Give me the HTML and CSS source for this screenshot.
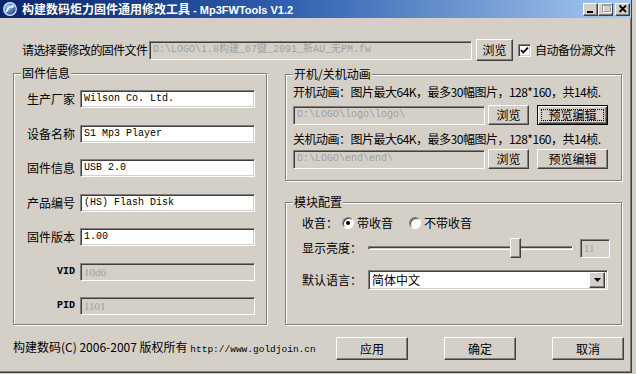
FILE: index.html
```html
<!DOCTYPE html>
<html lang="zh-CN">
<head>
<meta charset="utf-8">
<title>Mp3FWTools V1.2</title>
<link rel="stylesheet" href="styles.css">
</head>
<body>
<div class="window">
  <div class="titlebar">
    <svg class="app-icon" viewBox="0 0 14 14">
      <defs>
        <radialGradient id="ig" cx="35%" cy="35%" r="75%">
          <stop offset="0" stop-color="#9cc8ff"/>
          <stop offset="1" stop-color="#0b3b8c"/>
        </radialGradient>
      </defs>
      <circle cx="7" cy="7" r="6.3" fill="url(#ig)" stroke="#e8eef8" stroke-width="1.2"/>
      <path d="M3.2 10.2 C4.6 6.2 7.4 4.2 10.2 4.4" stroke="#fff" stroke-width="1.7" fill="none"/>
      <path d="M8.6 2.6 L11.6 4.3 L9.2 6.6 Z" fill="#fff"/>
    </svg>
    <span class="title">构建数码炬力固件通用修改工具<span class="title-en"> - Mp3FWTools V1.2</span></span>
    <div class="caption-btns">
      <span class="cbtn"><svg viewBox="0 0 12 10" class="cglyph"><rect x="2" y="7" width="6" height="2" fill="#000"/></svg></span>
      <span class="cbtn"><svg viewBox="0 0 12 10" class="cglyph"><rect x="3.5" y="1.5" width="8" height="7" fill="none" stroke="#fff"/><rect x="2.5" y="0.5" width="8" height="7" fill="none" stroke="#a0a0a0"/><rect x="2" y="0" width="9" height="2" fill="#a0a0a0"/></svg></span>
      <span class="cbtn close"><svg viewBox="0 0 12 10" class="cglyph"><path d="M2.5 1.5 L9 8 M9 1.5 L2.5 8" stroke="#000" stroke-width="1.8"/></svg></span>
    </div>
  </div>

  <div class="client">
    <div class="file-row">
      <span class="file-label">请选择要修改的固件文件</span>
      <div class="edit disabled path">D:\LOGO\1.8构建_67键_2091_新AU_无PM.fw</div>
      <span class="btn browse-top">浏览</span>
      <span class="check"><svg viewBox="0 0 9 9" width="9" height="9"><path d="M1 4 L3.3 6.4 L8 1.6" stroke="#000" stroke-width="1.8" fill="none"/></svg></span>
      <span class="check-label">自动备份源文件</span>
    </div>

    <div class="groups">
      <div class="group info">
        <span class="group-title">固件信息</span>
        <div class="info-grid">
          <span class="lbl">生产厂家</span><div class="edit">Wilson Co. Ltd.</div>
          <span class="lbl">设备名称</span><div class="edit">S1 Mp3 Player</div>
          <span class="lbl">固件信息</span><div class="edit">USB 2.0</div>
          <span class="lbl">产品编号</span><div class="edit">(HS) Flash Disk</div>
          <span class="lbl">固件版本</span><div class="edit">1.00</div>
          <span class="lbl latin">VID</span><div class="edit disabled num">10d6</div>
          <span class="lbl latin">PID</span><div class="edit disabled num">1101</div>
        </div>
      </div>

      <div class="right-col">
        <div class="group anim">
          <span class="group-title">开机/关机动画</span>
          <div class="anim-text">开机动画：图片最大64K，最多30幅图片，128*160，共14桢.</div>
          <div class="anim-row">
            <div class="edit disabled path-s">D:\LOGO\logo\logo\</div>
            <span class="btn browse">浏览</span>
            <span class="btn preview focus"><span class="focus-rect">预览编辑</span></span>
          </div>
          <div class="anim-text second">关机动画：图片最大64K，最多30幅图片，128*160，共14桢.</div>
          <div class="anim-row second">
            <div class="edit disabled path-s">D:\LOGO\end\end\</div>
            <span class="btn browse">浏览</span>
            <span class="btn preview">预览编辑</span>
          </div>
        </div>

        <div class="group module">
          <span class="group-title">模块配置</span>
          <div class="mod-row radio-row">
            <span>收音：</span>
            <span class="radio"><span class="dot"></span></span>
            <span class="radio-label">带收音</span>
            <span class="radio second"></span>
            <span class="radio-label">不带收音</span>
          </div>
          <div class="mod-row bright-row">
            <span class="mod-label">显示亮度：</span>
            <div class="slider">
              <div class="track"></div>
              <span class="thumb"></span>
            </div>
            <div class="edit disabled num value">11</div>
          </div>
          <div class="mod-row lang-row">
            <span class="mod-label">默认语言：</span>
            <div class="combo">
              <span class="combo-text">简体中文</span>
              <span class="combo-btn"><svg viewBox="0 0 7 4" width="7" height="4"><path d="M0 0 H7 L3.5 4 Z" fill="#000"/></svg></span>
            </div>
          </div>
        </div>
      </div>
    </div>

    <div class="footer">
      <span class="copyright">构建数码(C) 2006-2007 版权所有 <span class="url">http://www.goldjoin.cn</span></span>
      <span class="btn big">应用</span>
      <span class="btn big">确定</span>
      <span class="btn big">取消</span>
    </div>
  </div>
</div>
</body>
</html>
```

FILE: styles.css
```css
* {
  box-sizing: border-box;
  margin: 0;
  padding: 0;
}

html, body {
  background: #d4d0c8;
}

body {
  font-family: "Noto Sans CJK SC", sans-serif;
  font-size: 12px;
  line-height: 14px;
  color: #000;
  overflow: hidden;
}

.window {
  width: 632px;
  height: 373px;
  display: flex;
  flex-direction: column;
  border-right: 1px solid #404040;
  border-bottom: 1px solid #404040;
  box-shadow: inset -1px -1px 0 #808080;
}

/* title bar */
.titlebar {
  height: 18px;
  flex: none;
  display: flex;
  align-items: center;
  padding: 0 1px 0 3px;
  background: linear-gradient(to right, #0a246a 0%, #2f5fae 45%, #a6caf0 100%);
  color: #fff;
}

.app-icon {
  width: 14px;
  height: 14px;
  flex: none;
  margin-right: 5px;
}

.title {
  flex: 1;
  font-weight: bold;
  font-size: 12px;
  line-height: 14px;
  white-space: nowrap;
}

.title-en {
  font-family: "Liberation Sans", sans-serif;
  font-size: 11px;
}

.caption-btns {
  display: flex;
  align-items: center;
}

.cbtn {
  width: 15px;
  height: 13px;
  background: #d4d0c8;
  border: 1px solid;
  border-color: #fff #404040 #404040 #fff;
  box-shadow: inset -1px -1px 0 #808080;
  display: flex;
  align-items: center;
  justify-content: center;
}

.cbtn.close {
  margin-left: 2px;
}

.cglyph {
  width: 12px;
  height: 10px;
}

/* client area */
.client {
  flex: 1;
  padding: 21px 0 0 13px;
  display: flex;
  flex-direction: column;
  align-items: flex-start;
}

.file-row {
  display: flex;
  align-items: center;
  height: 22px;
}

.file-label {
  margin-left: 9px;
  width: 127px;
  letter-spacing: -0.6px;
  white-space: nowrap;
}

/* sunken edit */
.edit {
  height: 19px;
  background: #fff;
  border: 1px solid;
  border-color: #808080 #fff #fff #808080;
  box-shadow: inset 1px 1px 0 #404040, inset -1px -1px 0 #d4d0c8;
  padding: 0 3px;
  display: flex;
  align-items: center;
  font-family: "Liberation Mono", "Noto Sans CJK SC", monospace;
  font-size: 10px;
  white-space: nowrap;
  overflow: hidden;
}

.edit.disabled {
  background: #d4d0c8;
  color: #a0a0a0;
}

.edit.num {
  font-family: "Liberation Serif", serif;
  font-size: 11px;
}

.path {
  width: 323px;
}

/* raised button */
.btn {
  display: flex;
  align-items: center;
  justify-content: center;
  background: #d4d0c8;
  border: 1px solid;
  border-color: #fff #404040 #404040 #fff;
  box-shadow: inset -1px -1px 0 #808080;
  font-size: 12px;
  line-height: 14px;
  white-space: nowrap;
}

.browse-top {
  width: 37px;
  height: 22px;
  margin-left: 4px;
}

.check {
  width: 13px;
  height: 13px;
  margin-left: 5px;
  background: #fff;
  border: 1px solid;
  border-color: #808080 #fff #fff #808080;
  box-shadow: inset 1px 1px 0 #404040, inset -1px -1px 0 #d4d0c8;
  display: flex;
  align-items: center;
  justify-content: center;
}

.check-label {
  margin-left: 4px;
  letter-spacing: -0.5px;
  white-space: nowrap;
}

/* groups */
.groups {
  display: flex;
  gap: 18px;
  margin-top: 12px;
}

.group {
  border: 1px solid #808080;
  box-shadow: inset 1px 1px 0 #fff, 1px 1px 0 #fff;
  display: flex;
  flex-direction: column;
  align-items: flex-start;
}

.group-title {
  margin: -8px 0 0 7px;
  padding: 0 1px;
  height: 14px;
  line-height: 14px;
  background: #d4d0c8;
  white-space: nowrap;
}

.info {
  width: 254px;
  height: 252px;
}

.info-grid {
  display: grid;
  grid-template-columns: 61px 175px;
  grid-auto-rows: 18px;
  column-gap: 5px;
  row-gap: 16.5px;
  margin-top: 10px;
  align-items: center;
}

.lbl {
  text-align: right;
  line-height: 18px;
  white-space: nowrap;
}

.lbl.latin {
  font-family: "Liberation Mono", monospace;
  font-weight: bold;
  font-size: 10px;
}

.info-grid .edit {
  height: 18px;
}

.right-col {
  display: flex;
  flex-direction: column;
  gap: 21px;
  margin-top: 1px;
}

.anim {
  width: 337px;
  height: 107px;
  padding-left: 7px;
}

.anim .group-title {
  margin-left: 0;
}

.anim-text {
  margin-top: 3px;
  line-height: 16px;
  letter-spacing: -0.5px;
  white-space: nowrap;
}

.anim-text.second {
  margin-top: 6px;
}

.anim-row {
  display: flex;
  align-items: center;
  height: 20px;
  margin-top: 5px;
}

.anim-row.second {
  margin-top: 2px;
}

.path-s {
  width: 192px;
}

.browse {
  width: 41px;
  height: 20px;
  margin-left: 3px;
}

.preview {
  width: 71px;
  height: 20px;
  margin-left: 8px;
}

.btn.focus {
  border: 1px solid #000;
  box-shadow: inset 1px 1px 0 #fff, inset -1px -1px 0 #404040, inset -2px -2px 0 #808080;
  padding: 3px;
}

.focus-rect {
  flex: 1;
  align-self: stretch;
  border: 1px dotted #000;
  display: flex;
  align-items: center;
  justify-content: center;
}

/* module config */
.module {
  width: 337px;
  height: 123px;
  padding-left: 16px;
}

.module .group-title {
  margin-left: -9px;
}

.mod-row {
  display: flex;
  align-items: center;
  height: 20px;
  white-space: nowrap;
}

.radio-row {
  margin-top: 4px;
}

.bright-row {
  margin-top: 5px;
}

.lang-row {
  margin-top: 12px;
}

.radio {
  width: 12px;
  height: 12px;
  border-radius: 50%;
  background: #fff;
  border: 1px solid;
  border-color: #808080 #fff #fff #808080;
  box-shadow: inset 1px 1px 0 #404040;
  display: flex;
  align-items: center;
  justify-content: center;
  margin-left: 4px;
}

.radio.second {
  margin-left: 16px;
}

.dot {
  width: 4px;
  height: 4px;
  border-radius: 50%;
  background: #000;
}

.radio-label {
  margin-left: 3px;
}

.mod-label {
  width: 66px;
}

.slider {
  position: relative;
  width: 205px;
  height: 20px;
  display: flex;
  align-items: center;
}

.track {
  flex: 1;
  height: 4px;
  border: 1px solid;
  border-color: #808080 #fff #fff #808080;
  box-shadow: inset 1px 1px 0 #404040;
}

.thumb {
  position: absolute;
  left: 142px;
  top: 0;
  width: 11px;
  height: 20px;
  background: #d4d0c8;
  border: 1px solid;
  border-color: #fff #404040 #404040 #fff;
  box-shadow: inset -1px -1px 0 #808080;
}

.value {
  width: 30px;
  height: 19px;
  margin-left: 7px;
}

.combo {
  width: 240px;
  height: 20px;
  background: #fff;
  border: 1px solid;
  border-color: #808080 #fff #fff #808080;
  box-shadow: inset 1px 1px 0 #404040, inset -1px -1px 0 #d4d0c8;
  display: flex;
  align-items: center;
  padding: 2px 2px 2px 3px;
}

.combo-text {
  flex: 1;
}

.combo-btn {
  width: 16px;
  height: 16px;
  background: #d4d0c8;
  border: 1px solid;
  border-color: #fff #404040 #404040 #fff;
  box-shadow: inset -1px -1px 0 #808080;
  display: flex;
  align-items: center;
  justify-content: center;
}

/* footer */
.footer {
  display: flex;
  align-items: center;
  height: 23px;
  margin-top: 12px;
}

.copyright {
  width: 323px;
  white-space: nowrap;
}

.url {
  font-family: "Liberation Mono", monospace;
  font-size: 9.5px;
}

.btn.big {
  width: 72px;
  height: 23px;
}

.btn.big + .btn.big {
  margin-left: 36px;
}
```
